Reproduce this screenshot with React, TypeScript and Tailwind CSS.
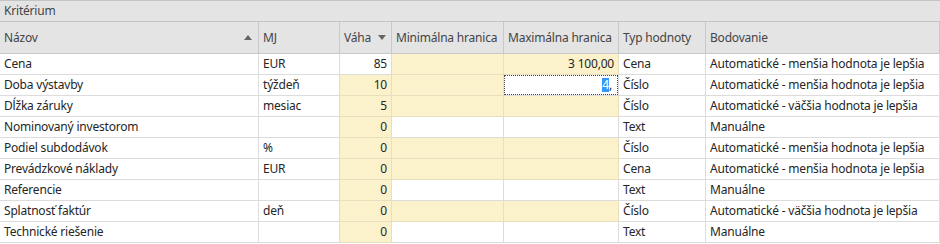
import React from "react";

type Row = {
  name: string;
  mj: string;
  vaha: string;
  vahaY: boolean;
  minY: boolean;
  maxY: boolean;
  max?: string;
  edit?: boolean;
  typ: string;
  bod: string;
};

const rows: Row[] = [
  { name: "Cena", mj: "EUR", vaha: "85", vahaY: false, minY: true, maxY: true, max: "3 100,00", typ: "Cena", bod: "Automatické - menšia hodnota je lepšia" },
  { name: "Doba výstavby", mj: "týždeň", vaha: "10", vahaY: true, minY: true, maxY: false, edit: true, typ: "Číslo", bod: "Automatické - menšia hodnota je lepšia" },
  { name: "Dĺžka záruky", mj: "mesiac", vaha: "5", vahaY: true, minY: true, maxY: true, typ: "Číslo", bod: "Automatické - väčšia hodnota je lepšia" },
  { name: "Nominovaný investorom", mj: "", vaha: "0", vahaY: true, minY: false, maxY: false, typ: "Text", bod: "Manuálne" },
  { name: "Podiel subdodávok", mj: "%", vaha: "0", vahaY: true, minY: true, maxY: true, typ: "Číslo", bod: "Automatické - menšia hodnota je lepšia" },
  { name: "Prevádzkové náklady", mj: "EUR", vaha: "0", vahaY: true, minY: true, maxY: true, typ: "Cena", bod: "Automatické - menšia hodnota je lepšia" },
  { name: "Referencie", mj: "", vaha: "0", vahaY: true, minY: false, maxY: false, typ: "Text", bod: "Manuálne" },
  { name: "Splatnosť faktúr", mj: "deň", vaha: "0", vahaY: true, minY: true, maxY: true, typ: "Číslo", bod: "Automatické - väčšia hodnota je lepšia" },
  { name: "Technické riešenie", mj: "", vaha: "0", vahaY: true, minY: false, maxY: false, typ: "Text", bod: "Manuálne" },
];

const cell = "h-[21px] border-b border-r border-[#dcdcdc] px-[4px] flex items-center overflow-hidden whitespace-nowrap";
const yellow = "bg-[#fbf2cb] border-[#e8dfbd]";

function Up() {
  return (
    <svg width="8" height="5" viewBox="0 0 8 5" className="shrink-0">
      <path d="M0 5 L4 0 L8 5 Z" fill="#666" />
    </svg>
  );
}
function Down() {
  return (
    <svg width="8" height="5" viewBox="0 0 8 5" className="shrink-0">
      <path d="M0 0 L8 0 L4 5 Z" fill="#666" />
    </svg>
  );
}

export default function App() {
  const hcell = "h-[32px] border-b border-r border-[#c9c9c9] px-[4px] flex items-center whitespace-nowrap";
  return (
    <div
      className="w-[940px] h-[244px] bg-white text-[#262626] text-[12px] tracking-[-0.2px] overflow-hidden"
      style={{ fontFamily: '"Noto Sans", "Open Sans", sans-serif' }}
    >
      <div className="h-[22px] border-t border-b border-[#c4c4c4] bg-[#e4e4e4] px-[4px] flex items-center text-[#444]">
        Kritérium
      </div>
      <div className="grid grid-cols-[259px_81px_52px_112px_115px_87px_234px] bg-[#e4e4e4] text-[#444]">
        <div className={hcell + " justify-between pr-[6px]"}>
          <span>Názov</span>
          <Up />
        </div>
        <div className={hcell}>MJ</div>
        <div className={hcell + " justify-between pr-[5px]"}>
          <span>Váha</span>
          <Down />
        </div>
        <div className={hcell}>Minimálna hranica</div>
        <div className={hcell}>Maximálna hranica</div>
        <div className={hcell}>Typ hodnoty</div>
        <div className={hcell}>Bodovanie</div>
      </div>
      <div className="grid grid-cols-[259px_81px_52px_112px_115px_87px_234px]">
        {rows.map((r, i) => (
          <React.Fragment key={i}>
            <div className={cell}>{r.name}</div>
            <div className={cell}>{r.mj}</div>
            <div className={cell + " justify-end " + (r.vahaY ? yellow : "")}>{r.vaha}</div>
            <div className={cell + " " + (r.minY ? yellow : "")}></div>
            {r.edit ? (
              <div className="h-[21px] border-b border-r border-[#dcdcdc] p-0 flex">
                <div className="flex-1 border border-dotted border-[#444] flex items-center justify-end pr-[5px]">
                  <span className="bg-[#3399ff] text-white leading-[14px]">4</span>
                  <span className="leading-[14px]">,</span>
                </div>
              </div>
            ) : (
              <div className={cell + " justify-end " + (r.maxY ? yellow : "")}>{r.max ?? ""}</div>
            )}
            <div className={cell}>{r.typ}</div>
            <div className={cell}>{r.bod}</div>
          </React.Fragment>
        ))}
      </div>
    </div>
  );
}
